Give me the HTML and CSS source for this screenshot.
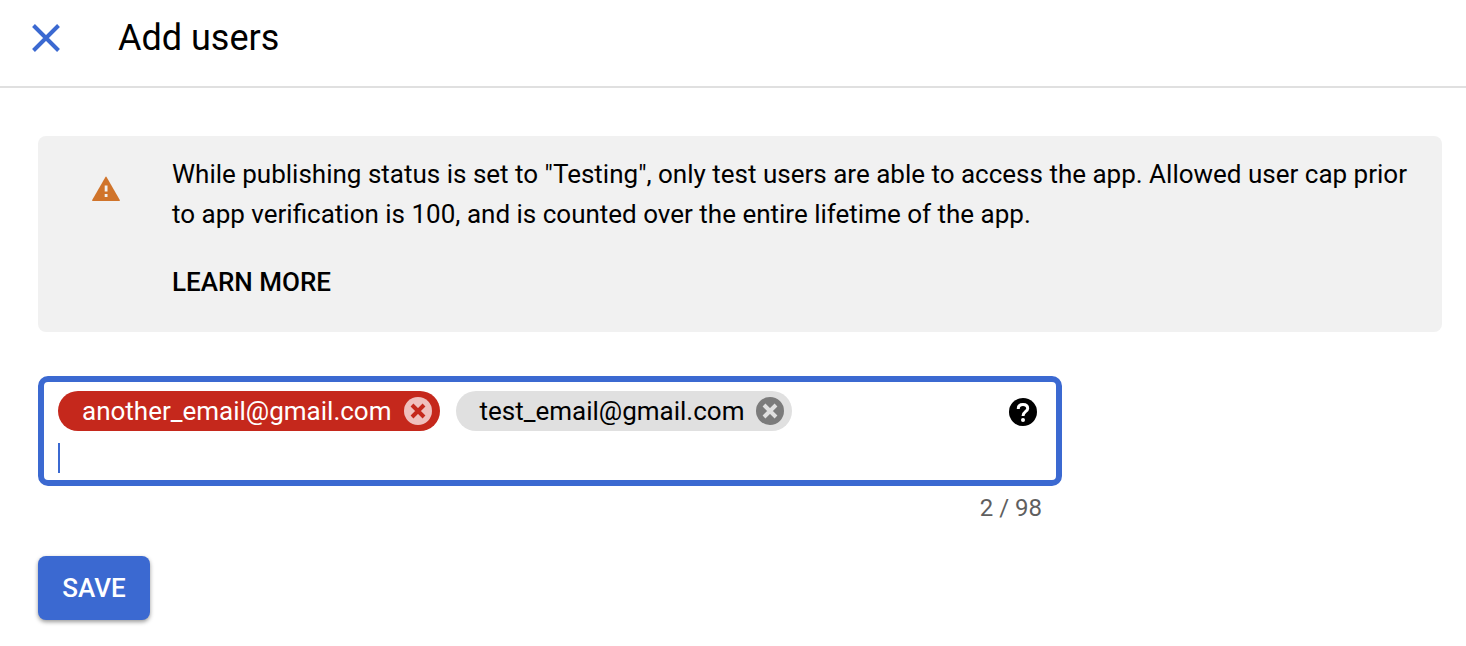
FILE: index.html
```html
<!DOCTYPE html>
<html lang="en">
<head>
<meta charset="utf-8">
<meta name="viewport" content="width=device-width, initial-scale=1">
<title>Add users</title>
<link rel="stylesheet" href="styles.css">
</head>
<body>
<header class="header">
  <button class="icon-button" type="button" aria-label="Close">
    <svg class="close-icon" viewBox="0 0 28 28" aria-hidden="true"><path d="M1.500 1.500 26.500 26.500M26.500 1.500 1.500 26.500" fill="none" stroke="currentColor" stroke-width="4"/></svg>
  </button>
  <h1 class="title">Add users</h1>
</header>
<main class="content">
  <section class="notice">
    <svg class="warning-icon" viewBox="0 0 28 26" aria-hidden="true"><path d="M13.300 1.200Q14 0 14.700 1.200L27.800 24Q28.300 25 27.200 25H.8Q-.3 25 .2 24Z" fill="#d0742b"/><path d="M12.700 9.500h2.800v6h-2.800zM12.700 18h2.800v3h-2.800z" fill="#f1f1f1"/></svg>
    <div class="notice-body">
      <p class="notice-text">While publishing status is set to "Testing", only test users are able to access the app. Allowed user cap prior to app verification is 100, and is counted over the entire lifetime of the app.</p>
      <a class="learn-more" href="#">LEARN MORE</a>
    </div>
  </section>
  <form class="form">
    <div class="field">
      <div class="entries">
        <span class="chip chip-error">another_email@gmail.com
          <button class="chip-remove" type="button" aria-label="Remove another_email@gmail.com"><svg viewBox="0 0 28 28" aria-hidden="true"><circle cx="14" cy="14" r="14" fill="#efc0be"/><path d="M8 8l12 12M20 8l-12 12" fill="none" stroke="#c5281c" stroke-width="4"/></svg></button>
        </span>
        <span class="chip">test_email@gmail.com
          <button class="chip-remove" type="button" aria-label="Remove test_email@gmail.com"><svg viewBox="0 0 28 28" aria-hidden="true"><circle cx="14" cy="14" r="14" fill="#7b7b7b"/><path d="M8 8l12 12M20 8l-12 12" fill="none" stroke="#e0e0e0" stroke-width="4"/></svg></button>
        </span>
        <input class="email-input" type="text" aria-label="Email addresses">
      </div>
      <button class="help" type="button" aria-label="Help"><svg viewBox="0 0 28 28" aria-hidden="true"><circle cx="14" cy="14" r="14"/><path d="M9.300 11V10.500Q9.300 6.500 14 6.500T18.700 10.500C18.700 13.500 14 13.500 14 18" fill="none" stroke="#fff" stroke-width="3"/><circle cx="14" cy="22" r="2" fill="#fff"/></svg></button>
    </div>
    <p class="counter">2 / 98</p>
    <button class="save" type="button">SAVE</button>
  </form>
</main>
</body>
</html>
```
FILE: styles.css
```css
* {
  box-sizing: border-box;
}

body {
  margin: 0;
  background: #fff;
  color: #000;
  font-family: Roboto, sans-serif;
  font-size: 26px;
  line-height: 40px;
}

button,
input {
  padding: 0;
  border: 0;
  background: none;
  font: inherit;
}

button {
  cursor: pointer;
}

svg {
  display: block;
  width: 28px;
}

.header {
  display: flex;
  align-items: center;
  gap: 58px;
  padding: 16px 32px 26px;
  border-bottom: 2px solid #e0e0e0;
}

.icon-button {
  color: #3b69d1;
}

.title {
  margin: 0;
  font-size: 36px;
  font-weight: 400;
  line-height: 44px;
}

.content {
  padding: 48px 24px 24px 38px;
}

.notice {
  display: flex;
  align-items: flex-start;
  gap: 52px;
  padding: 18px 32px 30px 54px;
  border-radius: 8px;
  background: #f1f1f1;
}

.warning-icon {
  flex: none;
  margin-top: 22px;
}

.notice-text {
  margin: 0 0 28px;
}

.learn-more {
  display: block;
  color: inherit;
  font-weight: 500;
  text-decoration: none;
}

.form {
  max-width: 1024px;
  margin-top: 44px;
}

.field {
  display: flex;
  align-items: flex-start;
  justify-content: space-between;
  gap: 16px;
  padding: 9px 19px 7px 14px;
  border: 6px solid #3b69d1;
  border-radius: 10px;
}

.entries {
  display: flex;
  flex: 1;
  flex-wrap: wrap;
  gap: 12px 16px;
}

.chip {
  display: flex;
  align-items: center;
  gap: 12px;
  padding: 0 8px 0 24px;
  border-radius: 20px;
  background: #e0e0e0;
}

.chip-error {
  background: #c5281c;
  color: #fff;
}

.email-input {
  flex: 1 0 100%;
  min-width: 0;
  height: 30px;
  border-left: 2px solid #3b69d1;
  outline: 0;
}

.help {
  margin-top: 7px;
}

.counter {
  margin: 0;
  padding: 2px 20px 0 0;
  color: #5f5f5f;
  font-size: 24px;
  text-align: right;
}

.save {
  min-width: 112px;
  margin-top: 28px;
  padding: 12px 24px;
  border-radius: 8px;
  background: #3b69d1;
  box-shadow: 0 2px 4px rgba(0, 0, 0, 0.4);
  color: #fff;
  font-weight: 500;
}
```
